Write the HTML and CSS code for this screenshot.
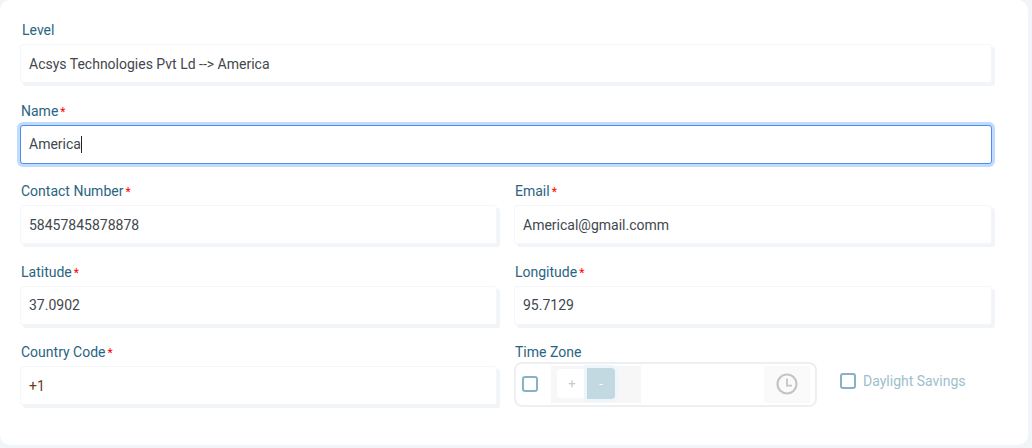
FILE: index.html
```html
<!DOCTYPE html>
<html lang="en">
<head>
<meta charset="utf-8">
<title>Edit Level</title>
<link rel="stylesheet" href="styles.css">
</head>
<body>
<main class="card">
  <div class="group">
    <div class="label label-first">Level</div>
    <div class="field">Acsys Technologies Pvt Ld --&gt; America</div>
  </div>
  <div class="group">
    <div class="label">Name<span class="req">*</span></div>
    <div class="field focused">America<span class="caret"></span></div>
  </div>
  <div class="row">
    <div class="group">
      <div class="label">Contact Number<span class="req">*</span></div>
      <div class="field">58457845878878</div>
    </div>
    <div class="group">
      <div class="label">Email<span class="req">*</span></div>
      <div class="field">Americal@gmail.comm</div>
    </div>
  </div>
  <div class="row">
    <div class="group">
      <div class="label">Latitude<span class="req">*</span></div>
      <div class="field">37.0902</div>
    </div>
    <div class="group">
      <div class="label">Longitude<span class="req">*</span></div>
      <div class="field">95.7129</div>
    </div>
  </div>
  <div class="row">
    <div class="group">
      <div class="label">Country Code<span class="req">*</span></div>
      <div class="field code">+1</div>
    </div>
    <div class="group">
      <div class="label">Time Zone</div>
      <div class="tz-line">
        <div class="tz">
          <div class="tz-check"><span class="box"></span></div>
          <div class="tz-sign">
            <span class="sign plus">+</span><span class="sign minus">-</span>
          </div>
          <div class="tz-input"></div>
          <div class="tz-clock">
            <svg class="clock" width="22" height="22" viewBox="0 0 22 22" fill="none" stroke="#c4c4c4" stroke-width="2.2">
              <circle cx="11" cy="11" r="9.5"/>
              <path d="M11 5.5V12.6H16" stroke-width="1.8"/>
            </svg>
          </div>
        </div>
        <div class="daylight"><span class="box"></span><span class="daylight-text">Daylight Savings</span></div>
      </div>
    </div>
  </div>
</main>
</body>
</html>
```
FILE: styles.css
```css
* { box-sizing: border-box; }
html, body { margin: 0; padding: 0; }
body {
  width: 1032px;
  height: 448px;
  overflow: hidden;
  background: #f1f4f9;
  font-family: Roboto, "Liberation Sans", sans-serif;
  font-size: 14px;
}
.card {
  width: 1028px;
  height: 445px;
  padding: 21px 36px 0 20px;
  background: #fff;
  border-radius: 10px;
}
.row {
  display: grid;
  grid-template-columns: 477px 477px;
  column-gap: 18px;
}
.row > .group + .group { margin-left: -1px; }
.group { height: 80.5px; }
.label {
  height: 23px;
  padding-left: 1px;
  line-height: 19px;
  color: #2a6482;
}
.label-first { padding-left: 2px; }
.req {
  margin-left: 2px;
  color: #f00;
  font-size: 12px;
}
.field {
  display: flex;
  align-items: center;
  height: 39px;
  padding: 0 8px;
  color: #42474d;
  background: #fff;
  border: 1px solid #f4f6fa;
  border-radius: 3px;
  box-shadow: 3px 3px 0 #f1f4f9;
}
.row > .group + .group > .field { width: 478px; }
.field.focused {
  border: 1px solid #4f8cf0;
  box-shadow: 0 0 0 3px #bfdcff;
}
.field.code { color: #6b3a1a; }
.caret {
  width: 1px;
  height: 17px;
  background: #222;
}
.tz-line {
  display: flex;
  align-items: center;
  margin-top: -4px;
}
.tz {
  display: flex;
  align-items: center;
  width: 303px;
  height: 45px;
  padding: 2px 5px 2px 2px;
  background: #fff;
  border: 2px solid #eeeff1;
  border-radius: 8px;
  flex: none;
}
.tz-check {
  display: flex;
  align-items: center;
  width: 33px;
  padding: 0 0 2px 4px;
  flex: none;
}
.box {
  display: block;
  width: 16px;
  height: 16px;
  border: 2px solid #85b2c6;
  border-radius: 3px;
  flex: none;
}
.tz-sign {
  display: flex;
  align-items: center;
  align-self: stretch;
  width: 90px;
  padding: 0 0 2px 6px;
  background: #f7f7f7;
  flex: none;
}
.sign {
  display: flex;
  align-items: center;
  justify-content: center;
  font-size: 13px;
}
.plus {
  width: 30px;
  height: 29px;
  color: #c9c9c9;
  background: #fff;
  border-radius: 4px 0 0 4px;
}
.minus {
  width: 28px;
  height: 31px;
  color: #fff;
  background: #c2d9e2;
  border-radius: 0 4px 4px 0;
  box-shadow: 0 0 0 3px #eef5fb;
}
.tz-input {
  width: 123px;
  align-self: stretch;
  background: #fff;
  flex: none;
}
.tz-clock {
  display: flex;
  align-items: center;
  justify-content: center;
  flex: 1;
  align-self: stretch;
  padding-bottom: 1px;
  background: #fafafa;
}
.daylight {
  display: flex;
  align-items: center;
  margin: -7px 0 0 23px;
}
.daylight-text {
  margin-left: 7px;
  color: #9dbecd;
}
```
